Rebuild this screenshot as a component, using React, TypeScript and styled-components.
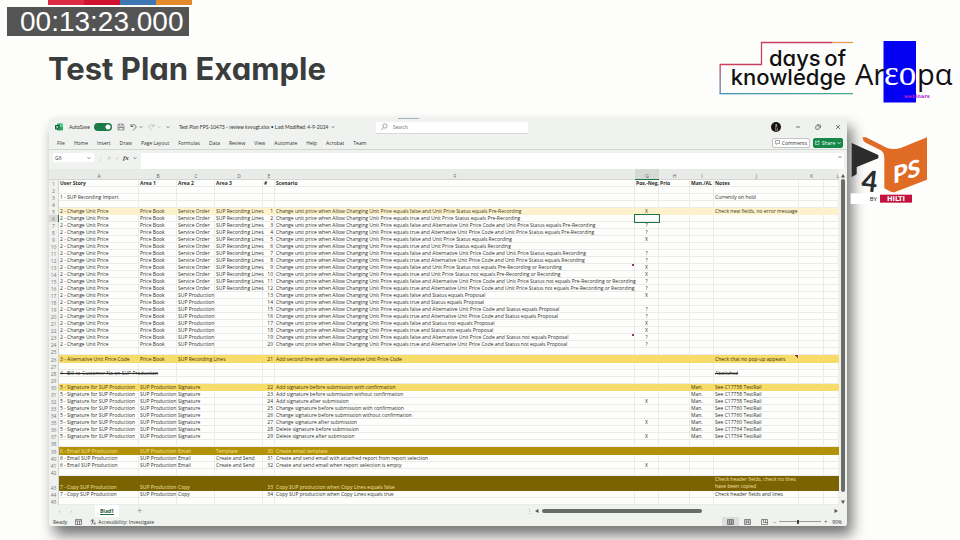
import React from "react";
import styled, { createGlobalStyle, css } from "styled-components";

const GlobalStyle = createGlobalStyle`
  * { box-sizing: border-box; }
  body { margin: 0; background: #fdfefc; font-family: "Open Sans", "Noto Sans", sans-serif; color: #333; }
  button, input { font: inherit; color: inherit; border: 0; padding: 0; margin: 0; background: none; }
`;

const Slide = styled.main`
  position: relative;
  display: flex;
  flex-direction: column;
  min-height: 100vh;
  overflow: hidden;
  background: #fdfefc;
`;

const Stripe = styled.div`
  display: flex;
  height: 5px;
  margin-left: 48px;
`;
const StripePart = styled.span<{ $color: string }>`
  width: 36px;
  background: ${(p) => p.$color};
`;

const Timestamp = styled.time`
  position: absolute;
  left: 7px;
  top: 7px;
  padding: 0 5px 0 13px;
  background: #545454;
  color: #fff;
  font: 28px/29px "Liberation Sans", sans-serif;
`;

const Header = styled.header`
  display: flex;
  align-items: flex-start;
  height: 113px;
  padding: 35px 5px 0 48px;
`;
const Title = styled.h1`
  flex: 1;
  margin: 9px 0 0;
  font: 700 31px/40px Inter, sans-serif;
  font-feature-settings: "cv11";
  color: #3b3d3c;
`;

const Body = styled.div`
  display: flex;
  align-items: flex-start;
  padding-left: 49px;
`;
const Aside = styled.aside`
  position: relative;
  flex: 0 0 113px;
  padding: 17px 0 0 3px;
`;

const Window = styled.section`
  flex: 1;
  min-width: 0;
  background: #f0f2f0;
  border-radius: 2px;
  box-shadow: 5px 9px 14px rgba(0, 0, 0, 0.55);
  font-size: 5px;
  line-height: 8px;
`;

const TitleBar = styled.div`
  display: flex;
  align-items: center;
  height: 18px;
  padding-left: 6px;
  background: linear-gradient(#9fb4bd, #9fb4bd) 349px 0 / 21px 1px no-repeat;
  font-family: Lato, sans-serif;
`;
const QuickAccess = styled.div`
  display: flex;
  flex: 0 0 321px;
  align-items: center;
  gap: 5px;
  white-space: nowrap;
`;
const AutoSave = styled.label`
  display: flex;
  align-items: center;
  gap: 4px;
  margin-left: 1px;
`;
const Toggle = styled.input`
  appearance: none;
  width: 18px;
  height: 8px;
  border-radius: 4px;
  background: radial-gradient(circle at 14px 4px, #fff 2px, transparent 3px), #1b7a45;
`;
const IconButton = styled.button`
  display: flex;
  align-items: center;
  gap: 2px;
`;
const DocTitle = styled.span`
  display: flex;
  align-items: center;
  gap: 3px;
  margin-left: 4px;
`;
const Search = styled.label`
  display: flex;
  align-items: center;
  flex: 0 0 152px;
  gap: 5px;
  height: 11px;
  padding-left: 4px;
  background: #fff;
  box-shadow: 0 1px 0 #d8dad8;
  input { flex: 1; min-width: 0; outline: 0; }
  input::placeholder { color: #777; opacity: 1; }
`;
const WindowControls = styled.div`
  display: flex;
  flex: 1;
  align-items: center;
  justify-content: flex-end;
  gap: 14px;
  padding-right: 6px;
`;

const MenuBar = styled.nav`
  display: flex;
  align-items: center;
  gap: 9px;
  height: 13px;
  padding: 0 4px 0 8px;
`;
const ActionGroup = styled.div`
  display: flex;
  gap: 3px;
  margin-left: auto;
`;
const Action = styled.button<{ $primary?: boolean }>`
  display: flex;
  align-items: center;
  justify-content: center;
  gap: 2px;
  width: ${(p) => (p.$primary ? 30 : 38)}px;
  height: 10px;
  border: 1px solid ${(p) => (p.$primary ? "#17884a" : "#c4c6c4")};
  border-radius: 2px;
  background: ${(p) => (p.$primary ? "#17884a" : "#fff")};
  color: ${(p) => (p.$primary ? "#fff" : "#333")};
`;

const FormulaBar = styled.div`
  display: flex;
  height: 20px;
  padding: 3px 3px 0 4px;
  border-top: 1px solid #d4d6d4;
`;
const NameBox = styled.label`
  display: flex;
  align-items: center;
  width: 41px;
  height: 9px;
  padding: 0 3px 0 2px;
  background: #fff;
  input { flex: 1; min-width: 0; }
`;
const FormulaTools = styled.div`
  display: flex;
  align-items: center;
  gap: 4px;
  width: 47px;
  height: 9px;
  padding-left: 4px;
  color: #bbb;
  em { color: #444; font: italic 700 7px/8px "Liberation Serif", serif; }
`;
const FormulaField = styled.label`
  display: flex;
  flex: 1;
  align-items: flex-start;
  justify-content: flex-end;
  padding: 2px 2px 0 2px;
  background: #fff;
  input { flex: 1; min-width: 0; }
`;

const SheetArea = styled.div`
  display: flex;
`;
const Sheet = styled.table`
  flex: 1;
  width: 100%;
  min-width: 0;
  table-layout: fixed;
  border-collapse: separate;
  border-spacing: 0;
  background: #fff;
  color: #2c2c2c;
  font: 5px/6px "Open Sans", "Noto Sans", sans-serif;
`;
const Col = styled.col<{ $w?: number }>`
  width: ${(p) => (p.$w ? `${p.$w}px` : "auto")};
`;
const ColumnHead = styled.th<{ $active?: boolean; $end?: boolean }>`
  height: 11px;
  padding: 3px 0 0;
  font-weight: 400;
  text-align: ${(p) => (p.$end ? "right" : "center")};
  color: #666;
  background: ${(p) => (p.$active ? "#d6d9d6" : "#e9ebe9")};
  border-bottom: 1px solid ${(p) => (p.$active ? "#217346" : "#d4d6d4")};
`;
const RowHead = styled.th<{ $active?: boolean }>`
  padding: 0;
  font-weight: 400;
  text-align: center;
  vertical-align: bottom;
  color: #777;
  background: ${(p) => (p.$active ? "#d6d9d6" : "#eff1ef")};
  border-right: 1px solid ${(p) => (p.$active ? "#217346" : "#d4d6d4")};
`;

type Tone = "plain" | "pale" | "yellow" | "gold" | "olive";
const tones: Record<Tone, { bg: string; fg: string; line: string }> = {
  plain: { bg: "#fefffd", fg: "#2c2c2c", line: "#eaecea" },
  pale: { bg: "#fdf2cc", fg: "#3a3524", line: "transparent" },
  yellow: { bg: "#f7dc6a", fg: "#3a320c", line: "transparent" },
  gold: { bg: "#b39108", fg: "#f6e59a", line: "transparent" },
  olive: { bg: "#7c6302", fg: "#efe4a2", line: "transparent" },
};
const Row = styled.tr<{ $tone: Tone; $height: number; $bold?: boolean; $struck?: boolean }>`
  height: ${(p) => p.$height}px;
  color: ${(p) => tones[p.$tone].fg};
  td {
    background: ${(p) => tones[p.$tone].bg};
    border-color: ${(p) => tones[p.$tone].line};
    font-weight: ${(p) => (p.$bold ? 700 : 400)};
    text-decoration: ${(p) => (p.$struck ? "line-through" : "none")};
  }
`;
const Cell = styled.td<{ $align?: string; $active?: boolean; $note?: boolean; $wrap?: boolean; $spill?: boolean }>`
  padding: 0 1px;
  border-style: solid;
  border-width: 0 1px 1px 0;
  vertical-align: bottom;
  text-align: ${(p) => p.$align ?? "left"};
  white-space: ${(p) => (p.$wrap ? "pre-line" : "nowrap")};
  ${(p) => p.$wrap && css`line-height: 7px;`}
  ${(p) => p.$spill && css`position: relative; z-index: 1; border-right-color: transparent;`}
  ${(p) => p.$active && css`outline: 1px solid #217346;`}
  ${(p) => p.$note && css`
    && { background-image: linear-gradient(to bottom left, #8a3a6a 50%, transparent 50%); background-size: 3px 3px; background-position: right top; background-repeat: no-repeat; }
  `}
`;

const VerticalScroll = styled.div`
  display: flex;
  flex: 0 0 8px;
  flex-direction: column;
  align-items: center;
  justify-content: space-between;
  padding: 5px 0 1px;
`;
const VerticalThumb = styled.div`
  flex: 1;
  width: 4px;
  margin: 1px 0 8px;
  border-radius: 2px;
  background: #6a6c6a;
`;

const TabBar = styled.div`
  display: flex;
  align-items: center;
  height: 12px;
  padding: 0 9px 0 10px;
  color: #888;
`;
const TabNav = styled.div`
  display: flex;
  gap: 10px;
  width: 36px;
`;
const SheetTab = styled.button`
  height: 12px;
  padding: 0 5px;
  background: #fff;
  color: #22543a;
  font-weight: 700;
  span { border-bottom: 1px solid #217346; }
`;
const AddSheet = styled.button`
  margin-left: 18px;
  font-size: 9px;
`;
const HorizontalScroll = styled.div`
  display: flex;
  align-items: center;
  flex: 0 0 311px;
  gap: 3px;
  margin-left: auto;
`;
const HorizontalThumb = styled.div`
  width: 160px;
  height: 4px;
  margin-right: auto;
  border-radius: 2px;
  background: #6a6c6a;
`;

const StatusBar = styled.footer`
  display: flex;
  align-items: center;
  gap: 8px;
  height: 9px;
  padding: 0 5px 0 4px;
`;
const StatusItem = styled.span`
  display: flex;
  align-items: center;
  gap: 2px;
`;
const ViewTools = styled.div`
  display: flex;
  align-items: center;
  margin-left: auto;
`;
const ViewButton = styled.button<{ $active?: boolean }>`
  display: flex;
  align-items: center;
  justify-content: center;
  width: 17px;
  height: 9px;
  background: ${(p) => (p.$active ? "#dcdedc" : "transparent")};
`;
const ZoomSlider = styled.input`
  appearance: none;
  width: 42px;
  height: 8px;
  margin: 0 3px;
  background: linear-gradient(#999, #999) center / 100% 1px no-repeat;
  &::-webkit-slider-thumb { appearance: none; width: 2px; height: 4px; background: #444; }
`;
const ZoomValue = styled.span`
  margin-left: 5px;
`;

const Chevron = ({ up, color = "#666" }: { up?: boolean; color?: string }) => (
  <svg width="4" height="4" viewBox="0 0 4 4" fill="none" stroke={color} strokeWidth=".7">
    <path d={up ? "M.5 3 2 1.2 3.5 3" : "M.5 1.2 2 2.8 3.5 1.2"} />
  </svg>
);
const Arrow = ({ d }: { d: string }) => (
  <svg width="4" height="4" viewBox="0 0 4 4" fill="#555"><path d={d} /></svg>
);

const ExcelIcon = () => (
  <svg width="8" height="8" viewBox="0 0 16 16">
    <rect x="4" y="1" width="12" height="14" rx="2" fill="#2aa869" />
    <path d="M10 1h4a2 2 0 0 1 2 2v5h-6z" fill="#55cf91" />
    <rect y="4" width="9" height="9" rx="1" fill="#0f6337" />
    <path d="m2.5 6 4 5m0-5-4 5" stroke="#fff" strokeWidth="1.3" />
  </svg>
);
const SaveIcon = () => (
  <svg width="8" height="8" viewBox="0 0 16 16" fill="none" stroke="#777" strokeWidth="1.3">
    <path d="M2 2h10l2 2v10H2zM5 2v4h6V2M4 14V9h8v5M2 9h12" />
  </svg>
);
const UndoIcon = ({ flip }: { flip?: boolean }) => (
  <svg width="7" height="8" viewBox="0 0 14 16" fill="none" stroke={flip ? "#bbb" : "#555"} strokeWidth="1.5">
    <path d={flip ? "M12 2v5H7M12 7C9 1 1 3 2 8c0 3 4 4 6 7" : "M2 2v5h5M2 7c3-6 11-4 10 1 0 3-4 4-6 7"} />
  </svg>
);
const SearchIcon = () => (
  <svg width="8" height="8" viewBox="0 0 16 16" fill="none" stroke="#777" strokeWidth="1.3">
    <circle cx="10" cy="6" r="4.3" /><path d="M7 9.5 2 14" />
  </svg>
);
const Avatar = () => (
  <svg width="10" height="10" viewBox="0 0 20 20">
    <circle cx="10" cy="10" r="10" fill="#151313" />
    <path d="M9 4c3-1 4 2 3 5l2 8H8l1-7z" fill="#b9aaa5" />
    <path d="M10 9h2v7h-3z" fill="#4d3335" />
  </svg>
);
const MinimizeIcon = () => (
  <svg width="6" height="6" viewBox="0 0 6 6" stroke="#555" strokeWidth=".8"><path d="M1 3h4" /></svg>
);
const RestoreIcon = () => (
  <svg width="6" height="6" viewBox="0 0 12 12" fill="none" stroke="#444" strokeWidth="1.3">
    <rect x="1.500" y="3.500" width="7" height="7" rx="1" /><path d="M4 1.500h5a2 2 0 0 1 2 2V8" />
  </svg>
);
const CloseIcon = () => (
  <svg width="6" height="6" viewBox="0 0 6 6" stroke="#444" strokeWidth=".7"><path d="m1 1 4 4m0-4L1 5" /></svg>
);
const CommentIcon = () => (
  <svg width="5" height="5" viewBox="0 0 10 10" fill="none" stroke="#555"><path d="M1 1h8v6H5L3 9V7H1z" /></svg>
);
const ShareIcon = () => (
  <svg width="5" height="5" viewBox="0 0 10 10" fill="none" stroke="#fff"><path d="M4 2H1v7h7V6M3 6c0-3 2-3 5-3M6 1l3 2-3 2" /></svg>
);
const GridIcon = ({ d }: { d: string }) => (
  <svg width="7" height="6" viewBox="0 0 14 12" fill="none" stroke="#555" strokeWidth="1.300"><path d={d} /></svg>
);
const AccessIcon = () => (
  <svg width="6" height="6" viewBox="0 0 12 12" fill="none" stroke="#444" strokeWidth="1.3">
    <circle cx="5" cy="2" r="1.300" /><path d="M1 4h8M5 4v3l-2 4M5 7l2 2M8 7l3 4m0-4-3 4" />
  </svg>
);

const DaysOfKnowledge = () => (
  <svg width="134" height="56" viewBox="719 49 134 56" role="img" aria-label="days of knowledge">
    <defs>
      <linearGradient id="edge" x1="0" y1="0" x2="0" y2="1">
        <stop offset="0" stopColor="#c9405f" /><stop offset="1" stopColor="#4b8fb8" />
      </linearGradient>
      <linearGradient id="base" x1="0" x2="1">
        <stop offset="0" stopColor="#4b8fb8" /><stop offset="1" stopColor="#4fae8c" />
      </linearGradient>
    </defs>
    <path d="M720 73.500h41.500v-22h71" fill="none" stroke="#c9405f" strokeWidth="1.300" />
    <path d="M832 51.500h21" stroke="#e29a50" strokeWidth="1.300" />
    <rect x="719.500" y="73" width="1.300" height="30" fill="url(#edge)" />
    <rect x="719.500" y="102" width="133.500" height="1.300" fill="url(#base)" />
    <g fontFamily="Inter, sans-serif" fontWeight="500" fill="#111" fontSize="22" style={{ fontFeatureSettings: '"cv11"' }}>
      <text x="769" y="75">days</text>
      <text x="846" y="75" textAnchor="end">of</text>
      <text x="846" y="94" textAnchor="end">knowledge</text>
    </g>
  </svg>
);

const Areopa = () => (
  <svg width="102" height="64" viewBox="853 40 102 64" role="img" aria-label="Areopa webinars">
    <rect x="883.500" y="41" width="32.500" height="61.500" fill="#0300f4" />
    <g fontFamily="'Open Sans', sans-serif" fontSize="29" fill="#111">
      <text x="855" y="85">Ar</text>
      <text x="917" y="85">pα</text>
    </g>
    <text x="884" y="85" fontFamily="'Liberation Serif', serif" fontSize="35" fill="#fff">εο</text>
    <text x="904" y="98" fontFamily="'DejaVu Sans', sans-serif" fontWeight="700" fontSize="5" fill="#b01fd6">webinars</text>
  </svg>
);

const FourPS = () => (
  <svg width="78" height="70" viewBox="450 315 234 210" role="img" aria-label="4PS by Hilti">
    <path d="M452 490h88v32h-88z" fill="#fff" />
    <path d="m455 339 80 36v10l-65 26v22l-15 8z" fill="#2b2c2c" />
    <path d="M487 322h11l62 31q20 7 42 1l79-32v127l-96 37q-8 2-15-2l-17-9v-92q0-16-12-23l-44-22q-8-4-10-16z" fill="#df6b25" />
    <g fontFamily="Lato, sans-serif">
      <text transform="translate(483 482) skewY(6)" fontSize="88" fontWeight="700" fontStyle="italic" fill="#2b2c2c">4</text>
      <text transform="translate(579 461) skewY(-17)" fontSize="70" fontWeight="900" fill="#fff">PS</text>
    </g>
    <text x="509" y="513" fontFamily="Lato, sans-serif" fontSize="18" fill="#333">BY</text>
    <rect x="540" y="494" width="96" height="24" fill="#c3123e" />
    <text x="588" y="513" textAnchor="middle" fontFamily="'DejaVu Sans', sans-serif" fontWeight="700" fontSize="20" fill="#fff">HILTI</text>
  </svg>
);

interface RowData {
  a?: string; b?: string; c?: string; d?: string; e?: string; f?: string; g?: string; h?: string; i?: string; j?: string;
  tone?: Tone; height?: number; bold?: boolean; struck?: boolean; noteOn?: "f" | "j"; spill?: "a" | "c";
}

const prefix = "Change unit price when Allow Changing Unit Price equals ";
const scenarios: [string, string][] = [
  ["false and Unit Price Status equals Pre-Recording", "X"],
  ["true and Unit Price Status equals Pre-Recording", ""],
  ["false and Alternative Unit Price Code and Unit Price Status equals Pre-Recording", "?"],
  ["true and Alternative Unit Price Code and Unit Price Status equals Pre-Recording", "?"],
  ["false and Unit Price Status equals Recording", "X"],
  ["true and Unit Price Status equals Recording", ""],
  ["false and Alternative Unit Price Code and Unit Price Status equals Recording", "?"],
  ["true and Alternative Unit Price Code and Unit Price Status equals Recording", "?"],
  ["false and Unit Price Status not equals Pre-Recording or Recording", "X"],
  ["true and Unit Price Status not equals Pre-Recording or Recording", "X"],
  ["false and Alternative Unit Price Code and Unit Price Status not equals Pre-Recording or Recording", "?"],
  ["true and Alternative Unit Price Code and Unit Price Status not equals Pre-Recording or Recording", "?"],
  ["false and Status equals Proposal", "X"],
  ["true and Status equals Proposal", ""],
  ["false and Alternative Unit Price Code and Status equals Proposal", "?"],
  ["true and Alternative Unit Price Code and Status equals Proposal", "?"],
  ["false and Status not equals Proposal", "X"],
  ["true and Status not equals Proposal", "X"],
  ["false and Alternative Unit Price Code and Status not equals Proposal", "?"],
  ["true and Alternative Unit Price Code and Status not equals Proposal", "?"],
];
const signatures: [string, string, string][] = [
  ["Add signature before submission with confirmation", "", "See C17758 TestRail"],
  ["Add signature before submission without confirmation", "", "See C17758 TestRail"],
  ["Add signature after submission", "X", "See C17758 TestRail"],
  ["Change signature before submission with confirmation", "", "See C17760 TestRail"],
  ["Change signature before submission without confirmation", "", "See C17760 TestRail"],
  ["Change signature after submission", "X", "See C17760 TestRail"],
  ["Delete signature before submission", "", "See C17764 TestRail"],
  ["Delete signature after submission", "X", "See C17764 TestRail"],
];

const email = { a: "6 - Email SUP Production", b: "SUP Production", c: "Email" };
const copy = { a: "7 - Copy SUP Production", b: "SUP Production", c: "Copy" };

const rows: RowData[] = [
  { a: "User Story", b: "Area 1", c: "Area 2", d: "Area 3", e: "#", f: "Scenario", g: "Pos.-Neg.", h: "Prio", i: "Man./AL", j: "Notes", bold: true },
  {},
  { a: "1 - SUP Recording Import", j: "Currently on hold" },
  {},
  ...scenarios.map(([text, mark], n): RowData => ({
    a: "2 - Change Unit Price",
    b: "Price Book",
    c: n < 12 ? "Service Order" : "SUP Production",
    d: n < 12 ? "SUP Recording Lines" : "",
    e: String(n + 1),
    f: prefix + text,
    g: mark,
    j: n === 0 ? "Check new fields, no error message" : "",
    tone: n === 0 ? "pale" : "plain",
    noteOn: n === 8 || n === 18 ? "f" : undefined,
  })),
  {},
  { a: "3 - Alternative Unit Price Code", b: "Price Book", c: "SUP Recording Lines", e: "21", f: "Add second line with same Alternative Unit Price Code", j: "Check that no pop-up appears", tone: "yellow", height: 8, noteOn: "j", spill: "c" },
  {},
  { a: "4 - Bill-to-Customer No on SUP Production", j: "Abolished", struck: true, spill: "a" },
  {},
  ...signatures.map(([text, mark, note], n): RowData => ({
    a: "5 - Signature for SUP Production",
    b: "SUP Production",
    c: "Signature",
    e: String(n + 22),
    f: text,
    g: mark,
    i: "Man.",
    j: note,
    tone: n === 0 ? "yellow" : "plain",
  })),
  {},
  { ...email, d: "Template", e: "30", f: "Create email template", tone: "gold", height: 8 },
  { ...email, d: "Create and Send", e: "31", f: "Create and send email with attached report from report selection" },
  { ...email, d: "Create and Send", e: "32", f: "Create and send email when report selection is empty", g: "X" },
  {},
  { ...copy, e: "33", f: "Copy SUP production when Copy Lines equals false", j: "Check header fields, check no lines\nhave been copied", tone: "olive", height: 14 },
  { ...copy, e: "34", f: "Copy SUP production when Copy Lines equals true", j: "Check header fields and lines" },
  {},
];

const widths = [10, 80, 38, 38, 48, 12, undefined, 24, 31, 24, 85, 25, 15];
const letters = "ABCDEFGHIJKL".split("");
const menus = ["File", "Home", "Insert", "Draw", "Page Layout", "Formulas", "Data", "Review", "View", "Automate", "Help", "Acrobat", "Team"];
const stripes = ["#dc2a45", "#d0112f", "#3f77b4", "#e58a2c"];

const SheetRow = ({ row, number }: { row: RowData; number: number }) => (
  <Row $tone={row.tone ?? "plain"} $height={row.height ?? 7} $bold={row.bold} $struck={row.struck}>
    <RowHead scope="row" $active={number === 6}>{number}</RowHead>
    <Cell $spill={row.spill === "a"}>{row.a}</Cell>
    <Cell>{row.b}</Cell>
    <Cell $spill={row.spill === "c"}>{row.c}</Cell>
    <Cell>{row.d}</Cell>
    <Cell $align={row.bold ? "left" : "right"}>{row.e}</Cell>
    <Cell $note={row.noteOn === "f"}>{row.f}</Cell>
    <Cell $align="center" $active={number === 6}>{row.g}</Cell>
    <Cell>{row.h}</Cell>
    <Cell>{row.i}</Cell>
    <Cell $note={row.noteOn === "j"} $wrap={row.height === 14}>{row.j}</Cell>
    <Cell />
    <Cell />
  </Row>
);

export default function App() {
  return (
    <Slide>
      <GlobalStyle />
      <Stripe>{stripes.map((color) => <StripePart key={color} $color={color} />)}</Stripe>
      <Timestamp>00:13:23.000</Timestamp>
      <Header>
        <Title>Test Plan Example</Title>
        <DaysOfKnowledge />
        <Areopa />
      </Header>
      <Body>
        <Window>
          <TitleBar>
            <QuickAccess>
              <ExcelIcon />
              <AutoSave>AutoSave<Toggle type="checkbox" defaultChecked /></AutoSave>
              <IconButton aria-label="Save"><SaveIcon /></IconButton>
              <IconButton aria-label="Undo"><UndoIcon /><Chevron /></IconButton>
              <IconButton aria-label="Redo"><UndoIcon flip /><Chevron color="#bbb" /></IconButton>
              <IconButton aria-label="Customize"><Chevron /></IconButton>
              <DocTitle>Test Plan FPS-10473 - review kvvugt.xlsx • Last Modified: 4-9-2024<Chevron /></DocTitle>
            </QuickAccess>
            <Search><SearchIcon /><input type="search" placeholder="Search" aria-label="Search" /></Search>
            <WindowControls>
              <Avatar />
              <IconButton aria-label="Minimize"><MinimizeIcon /></IconButton>
              <IconButton aria-label="Restore"><RestoreIcon /></IconButton>
              <IconButton aria-label="Close"><CloseIcon /></IconButton>
            </WindowControls>
          </TitleBar>
          <MenuBar>
            {menus.map((name) => <button key={name}>{name}</button>)}
            <ActionGroup>
              <Action><CommentIcon />Comments</Action>
              <Action $primary><ShareIcon />Share<Chevron color="#fff" /></Action>
            </ActionGroup>
          </MenuBar>
          <FormulaBar>
            <NameBox><input defaultValue="G6" aria-label="Name box" /><Chevron /></NameBox>
            <FormulaTools><span>⋮</span><span>✕</span><span>✓</span><em>fx</em><Chevron /></FormulaTools>
            <FormulaField><input aria-label="Formula" /><Chevron up /></FormulaField>
          </FormulaBar>
          <SheetArea>
            <Sheet>
              <colgroup>{widths.map((w, n) => <Col key={n} $w={w} />)}</colgroup>
              <thead>
                <tr>
                  <ColumnHead />
                  {letters.map((l) => <ColumnHead key={l} scope="col" $active={l === "G"} $end={l === "L"}>{l}</ColumnHead>)}
                </tr>
              </thead>
              <tbody>{rows.map((row, n) => <SheetRow key={n} row={row} number={n + 1} />)}</tbody>
            </Sheet>
            <VerticalScroll>
              <Arrow d="M0 3.500 2 0l2 3.500z" />
              <VerticalThumb />
              <Arrow d="M0 .5 2 4 4 .5z" />
            </VerticalScroll>
          </SheetArea>
          <TabBar>
            <TabNav><span>‹</span><span>›</span></TabNav>
            <SheetTab><span>Blad1</span></SheetTab>
            <AddSheet aria-label="New sheet">+</AddSheet>
            <HorizontalScroll>
              <span>⋮</span>
              <Arrow d="M3.500 0 0 2l3.500 2z" />
              <HorizontalThumb />
              <Arrow d="M.5 0 4 2 .5 4z" />
            </HorizontalScroll>
          </TabBar>
          <StatusBar>
            <span>Ready</span>
            <GridIcon d="M1 1h12v10H1zM1 4h12M5 4v7M9 4v7" />
            <StatusItem><AccessIcon />Accessibility: Investigate</StatusItem>
            <ViewTools>
              <ViewButton $active aria-label="Normal view"><GridIcon d="M1 1h12v10H1zM1 4h12M1 8h12M5 1v10M9 1v10" /></ViewButton>
              <ViewButton aria-label="Page layout view"><GridIcon d="M1 1h12v10H1zM4 1v10M10 1v10M4 4h6M4 7h6" /></ViewButton>
              <ViewButton aria-label="Page break view"><GridIcon d="M1 1h12v10H1zM5 1v6h8M9 1v6" /></ViewButton>
              <button aria-label="Zoom out">−</button>
              <ZoomSlider type="range" min="10" max="200" defaultValue="96" aria-label="Zoom" />
              <button aria-label="Zoom in">+</button>
              <ZoomValue>90%</ZoomValue>
            </ViewTools>
          </StatusBar>
        </Window>
        <Aside><FourPS /></Aside>
      </Body>
    </Slide>
  );
}
